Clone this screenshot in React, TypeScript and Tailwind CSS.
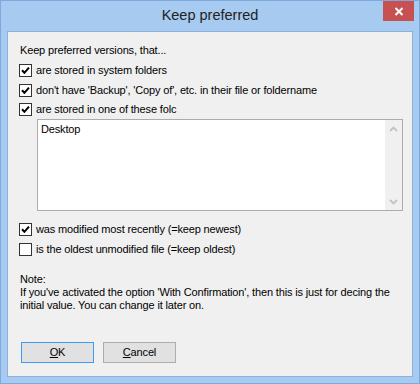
import React from 'react';

function CheckBox({ checked }: { checked: boolean }) {
  return (
    <span className="w-[13px] h-[13px] shrink-0 border border-[#333333] bg-white flex items-center justify-center">
      {checked && (
        <svg width="11" height="11" viewBox="0 0 11 11">
          <path d="M2 5.3 L4.4 7.8 L9 2.6" stroke="#000" strokeWidth="2" fill="none" />
        </svg>
      )}
    </span>
  );
}

function Option({ checked, label, h = 'h-[20px]' }: { checked: boolean; label: string; h?: string }) {
  return (
    <div className={`${h} flex items-center pl-[11px]`}>
      <CheckBox checked={checked} />
      <span className="ml-[4px] whitespace-nowrap">{label}</span>
    </div>
  );
}

function Chevron({ up }: { up: boolean }) {
  return (
    <svg width="9" height="6" viewBox="0 0 9 6">
      <path d={up ? 'M1 5 L4.5 1.5 L8 5' : 'M1 1 L4.5 4.5 L8 1'} stroke="#c2c2c2" strokeWidth="1.8" fill="none" />
    </svg>
  );
}

function App() {
  return (
    <div className="w-[420px] h-[384px] border border-[#7fa9dd] bg-[#a6caf0] flex flex-col font-['Liberation_Sans',Arial,sans-serif] text-black">
      <div className="relative h-[30px] flex items-center justify-center">
        <span className="text-[14.5px] text-[#222222] -mt-[1px]">Keep preferred</span>
        <div className="absolute right-[5px] top-0 w-[31px] h-[20px] bg-[#c75050] flex items-center justify-center">
          <svg width="10" height="9" viewBox="0 0 10 9">
            <path d="M1.5 1 L8.5 8 M8.5 1 L1.5 8" stroke="#fff" strokeWidth="2" fill="none" />
          </svg>
        </div>
      </div>

      <div className="mx-[6px] h-[346px] border border-[#8cb1dd] bg-[#f0f0f0] text-[11px] tracking-[-0.15px] flex flex-col">
        <div className="pt-[11px] pl-[12px] h-[25px] leading-[14px]">Keep preferred versions, that...</div>
        <div className="mt-[3px]">
          <Option checked label="are stored in system folders" />
          <Option checked label="don't have 'Backup', 'Copy of', etc. in their file or foldername" />
          <Option checked label="are stored in one of these folc" h="h-[19px]" />
        </div>

        <div className="ml-[29px] w-[366px] h-[92px] border border-[#acacac] bg-white flex">
          <div className="flex-1 pl-[3px] pt-[2px] leading-[14px]">Desktop</div>
          <div className="w-[17px] bg-[#f0f0f0] flex flex-col justify-between">
            <div className="h-[17px] flex items-center justify-center">
              <Chevron up />
            </div>
            <div className="h-[17px] flex items-center justify-center">
              <Chevron up={false} />
            </div>
          </div>
        </div>

        <div className="mt-[8px]">
          <Option checked label="was modified most recently (=keep newest)" />
          <Option checked={false} label="is the oldest unmodified file (=keep oldest)" />
        </div>

        <div className="mt-[14px] pl-[12px] leading-[13px]">
          <div>Note:</div>
          <div>If you've activated the option 'With Confirmation', then this is just for decing the</div>
          <div>initial value. You can change it later on.</div>
        </div>

        <div className="mt-[30px] ml-[13px] flex gap-[9px]">
          <button className="w-[73px] h-[21px] border border-[#3c9cf5] bg-[#e1e1e1] flex items-center justify-center">
            <span><span className="underline">O</span>K</span>
          </button>
          <button className="w-[73px] h-[21px] border border-[#adadad] bg-[#e1e1e1] flex items-center justify-center">
            <span><span className="underline">C</span>ancel</span>
          </button>
        </div>
      </div>
    </div>
  );
}

export default App;
